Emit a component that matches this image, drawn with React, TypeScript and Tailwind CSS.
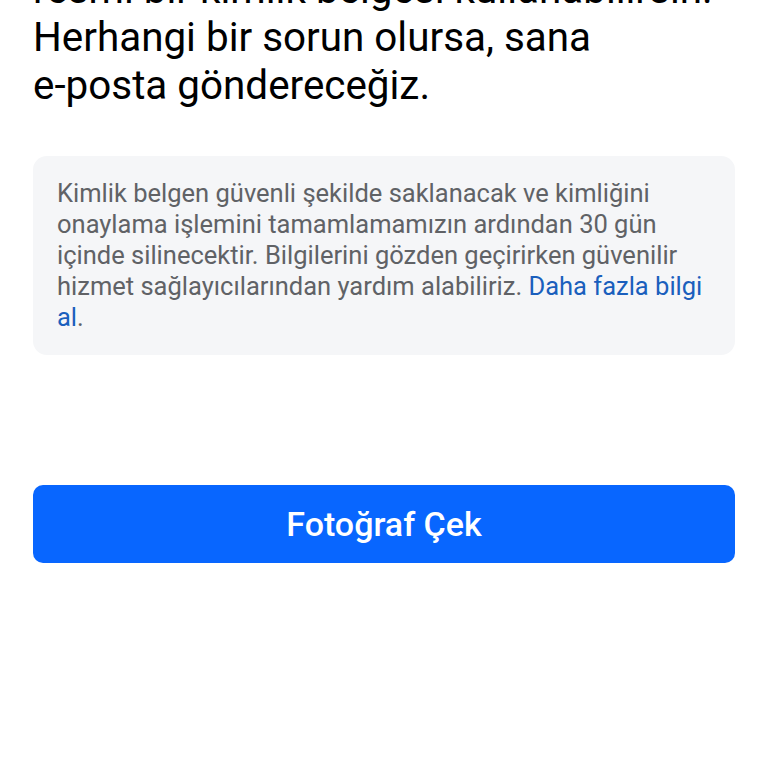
export default function App() {
  return (
    <div className="w-[768px] h-[768px] overflow-hidden bg-white font-['Roboto',sans-serif]">
      <div className="px-[33px]">
        <h1 className="-mt-[34px] text-[40.4px] leading-[48px] font-normal text-black">
          resmi bir kimlik belgesi kullanabilirsin.
          <br />
          Herhangi bir sorun olursa, sana
          <br />
          e-posta göndereceğiz.
        </h1>

        <div className="mt-[46px] rounded-[14px] bg-[#f5f6f8] pl-[24px] pr-[20px] pt-[22px] pb-[22px]">
          <p className="text-[25.5px] leading-[31px] text-[#606266]">
            Kimlik belgen güvenli şekilde saklanacak ve kimliğini onaylama işlemini tamamlamamızın ardından 30 gün
            içinde silinecektir. Bilgilerini gözden geçirirken güvenilir hizmet sağlayıcılarından yardım alabiliriz.{" "}
            <a className="text-[#1a5fbd]">Daha fazla bilgi al</a>.
          </p>
        </div>

        <button className="mt-[130px] w-full h-[78px] rounded-[10px] bg-[#0866ff] text-white text-[34px] font-medium">
          Fotoğraf Çek
        </button>
      </div>
    </div>
  );
}
